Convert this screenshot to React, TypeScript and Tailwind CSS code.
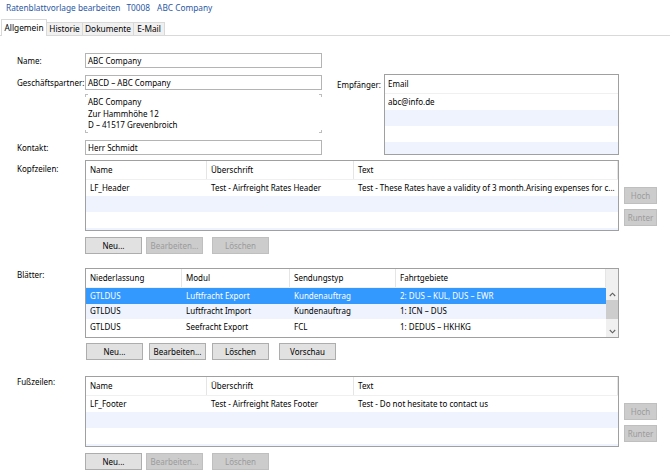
import type { ReactNode } from 'react';

const rowBlue = 'bg-[#eef3fd]';

function Btn({ children, disabled, className = 'w-[57px]' }: { children: ReactNode; disabled?: boolean; className?: string }) {
  return (
    <div
      className={
        'flex h-[17px] items-center justify-center border ' +
        (disabled ? 'border-[#bfbfbf] bg-[#cccccc] text-[#9b9b9b] ' : 'border-[#adadad] bg-[#e1e1e1] text-black ') +
        className
      }
    >
      {children}
    </div>
  );
}

function SideBtns() {
  return (
    <div className="ml-[5px] flex flex-col gap-[5px] pt-[27px]">
      <Btn disabled className="w-[33px] h-[16px]">Hoch</Btn>
      <Btn disabled className="w-[33px] h-[16px]">Runter</Btn>
    </div>
  );
}

function Input({ value }: { value: string }) {
  return (
    <div className="flex h-[15px] w-[237px] items-center border border-[#b4b4b4] pl-[2px]">{value}</div>
  );
}

function Label({ children, className = '' }: { children: ReactNode; className?: string }) {
  return <div className={'w-[85px] shrink-0 whitespace-nowrap pl-[17px] ' + className}>{children}</div>;
}

function NoteTable({ name, title, text }: { name: string; title: string; text: string }) {
  const cols = ['w-[121px]', 'w-[147px]', 'flex-1'];
  const head = ['Name', 'Überschrift', 'Text'];
  const vals = [name, title, text];
  return (
    <div className="h-[71px] w-[534px] overflow-hidden border border-[#a0a0a0] bg-white">
      <div className="flex h-[19px] border-b border-[#f0f0f0]">
        {head.map((h, i) => (
          <div key={h} className={'flex items-center border-r border-[#e5e5e5] pl-[4px] ' + cols[i]}>
            {h}
          </div>
        ))}
      </div>
      <div className="flex h-[16px]">
        {vals.map((v, i) => (
          <div key={i} className={'flex min-w-0 items-center whitespace-nowrap pl-[4px] ' + cols[i]}>
            {v}
          </div>
        ))}
      </div>
      <div className={'h-[16px] ' + rowBlue} />
      <div className="h-[16px]" />
      <div className={'h-[16px] ' + rowBlue} />
    </div>
  );
}

function Chevron({ up }: { up?: boolean }) {
  return (
    <svg width="7" height="5" viewBox="0 0 7 5" className="block">
      <polyline
        points={up ? '0.8,4 3.5,1.2 6.2,4' : '0.8,1 3.5,3.8 6.2,1'}
        fill="none"
        stroke="#606060"
        strokeWidth="1.1"
      />
    </svg>
  );
}

function SheetTable() {
  const cols = ['w-[96px]', 'w-[108px]', 'w-[106px]', 'flex-1'];
  const head = ['Niederlassung', 'Modul', 'Sendungstyp', 'Fahrtgebiete'];
  const rows = [
    ['GTLDUS', 'Luftfracht Export', 'Kundenauftrag', '2: DUS – KUL, DUS – EWR'],
    ['GTLDUS', 'Luftfracht Import', 'Kundenauftrag', '1: ICN – DUS'],
    ['GTLDUS', 'Seefracht Export', 'FCL', '1: DEDUS – HKHKG'],
  ];
  const bgs = ['bg-[#3399ff] text-white', rowBlue, 'bg-white'];
  return (
    <div className="flex h-[70px] w-[534px] overflow-hidden border border-[#a0a0a0] bg-white">
      <div className="flex-1">
        <div className="flex h-[19px] border-b border-[#f0f0f0]">
          {head.map((h, i) => (
            <div key={h} className={'flex items-center border-r border-[#e5e5e5] pl-[4px] ' + cols[i]}>
              {h}
            </div>
          ))}
        </div>
        {rows.map((r, ri) => (
          <div key={ri} className={'flex h-[15.5px] ' + bgs[ri]}>
            {r.map((v, i) => (
              <div key={i} className={'flex items-center pl-[4px] ' + cols[i]}>
                {v}
              </div>
            ))}
          </div>
        ))}
      </div>
      <div className="flex w-[12px] flex-col items-center bg-[#f0f0f0]">
        <div className="h-[19px]" />
        <div className="flex h-[12px] items-center">
          <Chevron up />
        </div>
        <div className="h-[19px] w-full bg-[#cdcdcd]" />
        <div className="flex-1" />
        <div className="flex h-[12px] items-center">
          <Chevron />
        </div>
      </div>
    </div>
  );
}

export default function App() {
  return (
    <div className="h-[470px] w-[670px] overflow-hidden bg-white font-['Noto_Sans',sans-serif] text-[8px] leading-[12px] text-black">
      <div className="flex h-[15px] items-center gap-[6px] pl-[6px] text-[8.3px] text-[#2a58a5]">
        <span>Ratenblattvorlage bearbeiten</span>
        <span>T0008</span>
        <span className="ml-[1px]">ABC Company</span>
      </div>

      <div className="flex h-[21px] items-end border-b border-[#d9d9d9] pl-[1px] text-[8.3px]">
        <div className="relative -mb-px flex h-[17px] w-[46px] items-start justify-center border border-b-0 border-[#d9d9d9] bg-white pt-[2px]">
          Allgemein
        </div>
        {[
          ['Historie', 'w-[36px]'],
          ['Dokumente', 'w-[51px]'],
          ['E-Mail', 'w-[31px]'],
        ].map(([t, w]) => (
          <div
            key={t}
            className={'flex h-[13px] items-center justify-center border border-b-0 border-l-0 border-[#d9d9d9] bg-[#f0f0f0] ' + w}
          >
            {t}
          </div>
        ))}
      </div>

      <div className="flex pt-[17px]">
        <div className="w-[322px]">
          <div className="flex items-center">
            <Label>Name:</Label>
            <Input value="ABC Company" />
          </div>
          <div className="mt-[7px] flex items-center">
            <Label>Geschäftspartner:</Label>
            <Input value="ABCD – ABC Company" />
          </div>
          <div className="mt-[4px] flex">
            <div className="w-[85px]" />
            <div className="relative h-[39px] w-[237px] pl-[3px] pt-[2px] leading-[11.5px]">
              <span className="absolute left-0 top-0 h-[3px] w-[3px] border-l border-t border-[#bdbdbd]" />
              <span className="absolute right-0 top-0 h-[3px] w-[3px] border-r border-t border-[#bdbdbd]" />
              <span className="absolute bottom-0 left-0 h-[3px] w-[3px] border-b border-l border-[#bdbdbd]" />
              <span className="absolute bottom-0 right-0 h-[3px] w-[3px] border-b border-r border-[#bdbdbd]" />
              <div>ABC Company</div>
              <div>Zur Hammhöhe 12</div>
              <div>D – 41517 Grevenbroich</div>
            </div>
          </div>
          <div className="mt-[7px] flex items-center">
            <Label>Kontakt:</Label>
            <Input value="Herr Schmidt" />
          </div>
        </div>

        <div className="ml-[15px] mt-[21px] flex">
          <div className="w-[47px] pt-[5px]">Empfänger:</div>
          <div className="h-[81px] w-[235px] overflow-hidden border border-[#a0a0a0] bg-white">
            <div className="flex h-[19px] items-center border-b border-[#f0f0f0] pl-[3px]">Email</div>
            <div className="flex h-[16px] items-center pl-[3px]">abc@info.de</div>
            <div className={'h-[16px] ' + rowBlue} />
            <div className="h-[16px]" />
            <div className={'h-[16px] ' + rowBlue} />
          </div>
        </div>
      </div>

      <div className="mt-[5px] flex">
        <Label className="pt-[3px]">Kopfzeilen:</Label>
        <div>
          <NoteTable
            name="LF_Header"
            title="Test - Airfreight Rates Header"
            text="Test - These Rates have a validity of 3 month.Arising expenses for c..."
          />
          <div className="mt-[6px] flex">
            <Btn className="w-[57px]">Neu...</Btn>
            <Btn disabled className="ml-[4px] w-[57px]">Bearbeiten...</Btn>
            <Btn disabled className="ml-[9px] w-[57px]">Löschen</Btn>
          </div>
        </div>
        <SideBtns />
      </div>

      <div className="mt-[14px] flex">
        <Label className="pt-[1px]">Blätter:</Label>
        <div>
          <SheetTable />
          <div className="mt-[5px] flex">
            <Btn className="ml-[1px] w-[57px]">Neu...</Btn>
            <Btn className="ml-[6px] w-[57px]">Bearbeiten...</Btn>
            <Btn className="ml-[6px] w-[57px]">Löschen</Btn>
            <Btn className="ml-[10px] w-[57px]">Vorschau</Btn>
          </div>
        </div>
      </div>

      <div className="mt-[16px] flex">
        <Label>Fußzeilen:</Label>
        <div>
          <NoteTable name="LF_Footer" title="Test - Airfreight Rates Footer" text="Test - Do not hesitate to contact us" />
          <div className="mt-[6px] flex">
            <Btn className="w-[57px]">Neu...</Btn>
            <Btn disabled className="ml-[4px] w-[57px]">Bearbeiten...</Btn>
            <Btn disabled className="ml-[9px] w-[57px]">Löschen</Btn>
          </div>
        </div>
        <SideBtns />
      </div>
    </div>
  );
}
